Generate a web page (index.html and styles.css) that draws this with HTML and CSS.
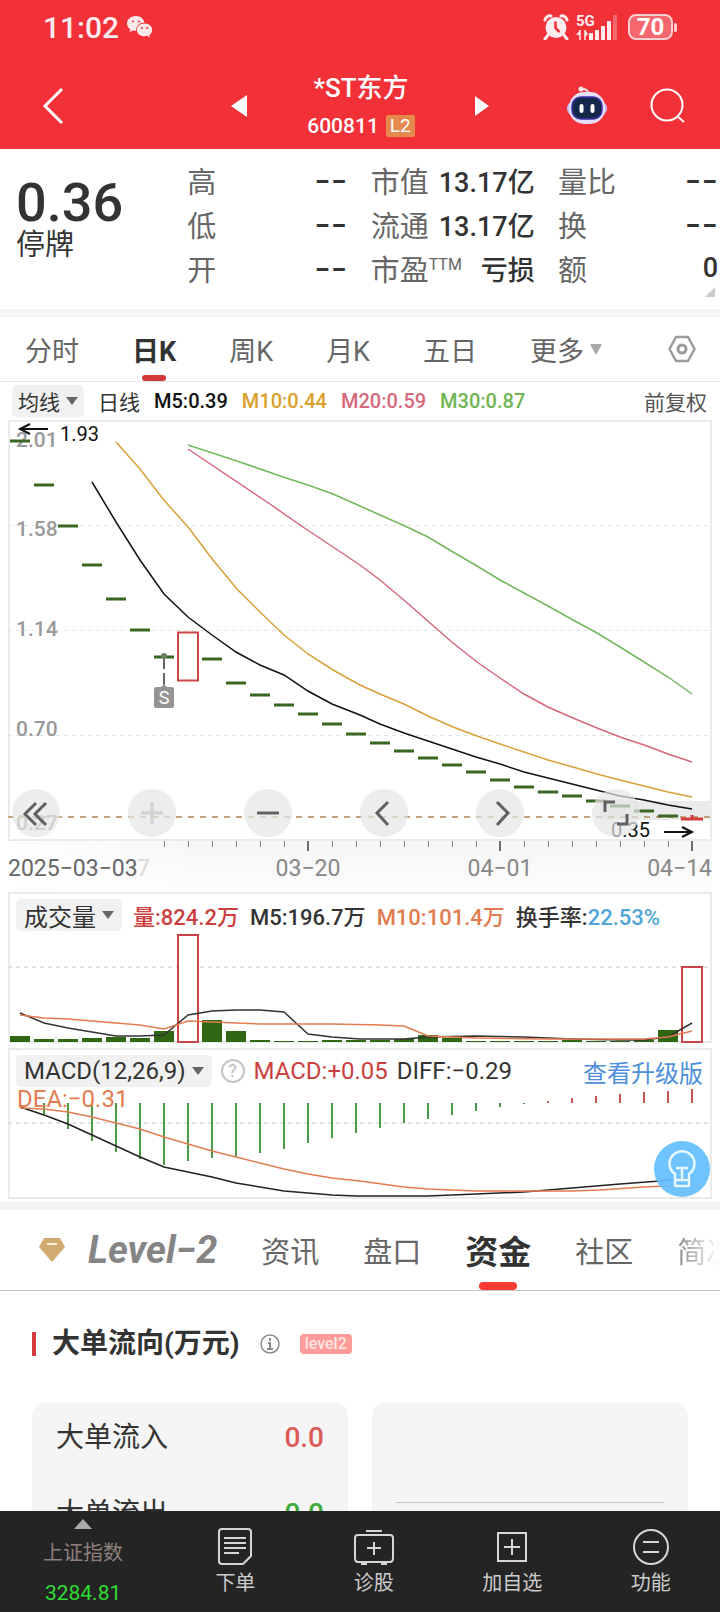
FILE: index.html
```html
<!DOCTYPE html>
<html lang="zh-CN">
<head>
    <meta charset="UTF-8">
    <meta name="viewport" content="width=device-width, initial-scale=1.0">
    <title>*ST东方 600811</title>
    <link rel="stylesheet" href="styles.css">
</head>
<body>
    <header class="top">
        <div class="status">
            <span class="time">11:02</span>
            <svg class="wechat" width="26" height="22" viewBox="0 0 26 22">
                <path fill="#fde9ea" d="M9 0C4 0 0 3.300 0 7.500c0 2.400 1.300 4.400 3.300 5.800L2.600 16l3.200-1.600c1 .3 2 .4 3.200.4C9 10 12.500 6.600 17.500 6.600 16.600 2.800 13.200 0 9 0z"/>
                <path fill="#fde9ea" d="M17.500 7.600c-4.300 0-7.700 2.800-7.700 6.300s3.400 6.300 7.700 6.300c.9 0 1.800-.1 2.600-.4l2.800 1.700-.6-2.600c1.800-1.200 2.900-3 2.900-5 0-3.500-3.400-6.300-7.700-6.300z"/>
                <g fill="#f13038"><circle cx="6" cy="5.500" r="1"/><circle cx="12" cy="5.500" r="1"/><circle cx="15" cy="12" r="1"/><circle cx="20" cy="12" r="1"/></g>
            </svg>
            <svg class="alarm" width="26" height="26" viewBox="0 0 26 26">
                <circle cx="13" cy="13.500" r="10.500" fill="#fdeced"/>
                <path d="M2 6a5 5 0 0 1 6-4M24 6a5 5 0 0 0-6-4M5 21l-3 4M21 21l3 4" fill="none" stroke="#fdeced" stroke-width="3" stroke-linecap="round"/>
                <path d="M12.500 7.500v6.500l4 4" fill="none" stroke="#f13038" stroke-width="2.500"/>
            </svg>
            <svg class="signal" width="42" height="26" viewBox="0 0 42 26">
                <text x="0" y="12" class="signal-text">5G</text>
                <path d="M4 16v10M9 16v10" stroke="#fdeced" stroke-width="1.500"/>
                <path d="M4 16l-4 5h4zM9 16l3 4-3 3z" fill="#fdeced"/>
                <path d="M15 26v-7M21 26V16M27 26V12M33 26V7" stroke="#fdeced" stroke-width="4"/>
                <path d="M39 26V1" stroke="#fdeced" stroke-opacity=".3" stroke-width="4"/>
            </svg>
            <span class="battery">70</span>
        </div>
        <div class="bar">
            <button class="icon-btn back" aria-label="返回">
                <svg width="24" height="38" viewBox="0 0 24 38"><path d="M21 2L4 19l17 17" fill="none" stroke="#fff" stroke-width="3"/></svg>
            </button>
            <div class="switch">
                <button class="icon-btn" aria-label="上一只"><svg width="16" height="22" viewBox="0 0 16 22"><path d="M16 0v22L0 11z" fill="#fff"/></svg></button>
                <div class="stock">
                    <h1>*ST东方</h1>
                    <p>600811 <span class="l2">L2</span></p>
                </div>
                <button class="icon-btn" aria-label="下一只"><svg width="14" height="20" viewBox="0 0 14 20"><path d="M0 0l14 10L0 20z" fill="#fff"/></svg></button>
            </div>
            <div class="tools">
                <button class="icon-btn" aria-label="智能助手">
                    <svg width="42" height="40" viewBox="0 0 42 40">
                        <path d="M22 7c0-3-2-4-6-4" fill="none" stroke="#f3dbe8" stroke-width="2"/>
                        <circle cx="15" cy="3" r="2.500" fill="#fbe9ee"/>
                        <rect x="1" y="16" width="40" height="13" rx="6" fill="#c9bdf0"/>
                        <rect x="3" y="6" width="36" height="32" rx="15" fill="#e6dff8"/>
                        <rect x="6" y="11" width="30" height="22" rx="9" fill="#14284c" stroke="#3c31a8" stroke-width="1.500"/>
                        <path d="M15.500 20v5M26.500 20v5" stroke="#fff" stroke-width="4" stroke-linecap="round"/>
                    </svg>
                </button>
                <button class="icon-btn" aria-label="搜索">
                    <svg width="35" height="36" viewBox="0 0 35 36"><circle cx="17" cy="17" r="15.500" fill="none" stroke="#fff" stroke-width="2"/><path d="M27 28l7 6" stroke="#fff" stroke-width="2"/></svg>
                </button>
            </div>
        </div>
    </header>

    <main>
        <section class="quote">
            <div class="price"><strong>0.36</strong><span>停牌</span></div>
            <dl class="stats">
                <div><dt>高</dt><dd class="none">--</dd></div>
                <div><dt>低</dt><dd class="none">--</dd></div>
                <div><dt>开</dt><dd class="none">--</dd></div>
            </dl>
            <dl class="stats">
                <div><dt>市值</dt><dd>13.17亿</dd></div>
                <div><dt>流通</dt><dd>13.17亿</dd></div>
                <div><dt>市盈<sup>TTM</sup></dt><dd>亏损</dd></div>
            </dl>
            <dl class="stats">
                <div><dt>量比</dt><dd class="none">--</dd></div>
                <div><dt>换</dt><dd class="none">--</dd></div>
                <div><dt>额</dt><dd>0</dd></div>
            </dl>
            <i class="expand"></i>
        </section>

        <nav class="periods">
            <button>分时</button>
            <button class="active">日K</button>
            <button>周K</button>
            <button>月K</button>
            <button>五日</button>
            <button>更多<i class="caret"></i></button>
            <button class="setting" aria-label="设置">
                <svg width="28" height="28" viewBox="0 0 28 28" fill="none" stroke="#9b9b9b"><path d="M8 2h12l6.500 12L20 26H8L1.500 14z" stroke-width="2.500" stroke-linejoin="round"/><circle cx="14" cy="14" r="4" stroke-width="3"/></svg>
            </button>
        </nav>

        <div class="legend">
            <button class="pill">均线<i class="caret"></i></button>
            <span>日线</span>
            <span class="black">M5:0.39</span>
            <span class="yellow">M10:0.44</span>
            <span class="pink">M20:0.59</span>
            <span class="green">M30:0.87</span>
            <span class="adjust">前复权</span>
        </div>

        <div class="panel kline">
            <svg class="chart" viewBox="10 422 700 417">
                <path class="grid" d="M8 525.500H708M8 630.500H708M8 735.500H708"/>
                <g class="scale">
                    <text x="16" y="447">2.01</text>
                    <text x="16" y="536">1.58</text>
                    <text x="16" y="636">1.14</text>
                    <text x="16" y="736">0.70</text>
                    <text x="16" y="830">0.27</text>
                </g>
                <rect x="600" y="801" width="110" height="19" fill="#ebebeb"/>
                <path d="M8 817H710" stroke="#bfa27a" stroke-width="2" stroke-dasharray="6 6"/>
                <!-- daily candles, 24 apart -->
                <path stroke="#3a6722" stroke-width="3" d="M10 441h20M34 485h20M58 526h20M82 565h20M106 599h20M130 630h20M154 657h20M202 659h20M226 683h20M250 695h20M274 705h20M298 714h20M322 724h20M346 734h20M370 743h20M394 751h20M418 758h20M442 765h20M466 772h20M490 780h20M514 787h20M538 792h20M562 796h20M586 801h20M610 806h20M634 811h20M658 816h20"/>
                <rect x="178" y="632.500" width="20" height="48" fill="#fff" stroke="#cc4645" stroke-width="2"/>
                <path d="M681 819h22M692 815v4" stroke="#d63c3a" stroke-width="3"/>
                <g fill="none" stroke-width="1.500">
                    <polyline stroke="#111" points="92,482 116,522 140,560 164,594 188,617 212,635 236,652 260,665 284,675 308,691 332,704 360,715 380,724 404,733 428,741 452,749 476,757 500,764 524,772 548,778 572,784 596,790 620,796 644,800 668,805 692,809"/>
                    <polyline stroke="#d9a03a" points="116,442 140,469 163,499 188,527 213,560 237,589 261,613 284,635 308,654 333,670 360,685 380,694 404,704 428,716 453,727 477,736 500,744 524,752 548,760 573,767 597,774 620,780 644,786 668,792 692,797"/>
                    <polyline stroke="#d5687c" points="188,449 267,502 300,525 333,547 360,565 380,580 405,601 438,630 453,643 477,662 500,678 524,694 548,707 573,718 597,728 620,737 647,746 668,754 692,762"/>
                    <polyline stroke="#72b85c" points="188,445 237,461 283,477 308,485 333,494 360,506 380,515 405,526 428,537 453,552 477,566 500,580 524,593 548,606 573,620 597,633 620,647 644,662 668,677 692,694"/>
                </g>
                <!-- sell mark -->
                <path d="M164 658v11M164 673v12" stroke="#666" stroke-width="2"/>
                <circle cx="164" cy="656" r="3" fill="#6b8060"/>
                <path d="M156 687h5l3-3 3 3h5q2 0 2 2v17q0 2-2 2h-16q-2 0-2-2v-17q0-2 2-2z" fill="#949494"/>
                <text x="164" y="704" class="mark">S</text>
                <g class="peak">
                    <path d="M48 429H20M30 424l-10 5 10 5M664 832h27M682 827l10 5-10 5"/>
                    <text x="60" y="441">1.93</text>
                    <text x="611" y="837">0.35</text>
                </g>
            </svg>
            <div class="controls">
                <button aria-label="最左"><svg viewBox="0 0 48 48"><path d="M24 14L13 25l11 11M34 14L23 25l11 11"/></svg></button>
                <button aria-label="放大" disabled><svg viewBox="0 0 48 48"><path d="M13 24h22M24 13v22"/></svg></button>
                <button aria-label="缩小"><svg viewBox="0 0 48 48"><path d="M13 24h22"/></svg></button>
                <button aria-label="左移"><svg viewBox="0 0 48 48"><path d="M28 13L17 24l11 12"/></svg></button>
                <button aria-label="右移"><svg viewBox="0 0 48 48"><path d="M21 13l11 11-11 12"/></svg></button>
                <button aria-label="全屏"><svg viewBox="0 0 48 48"><path d="M13 23V13h10M35 25v10H25"/></svg></button>
            </div>
        </div>

        <svg class="axis" viewBox="8 841 704 51">
            <path stroke="#8a8a8a" d="M164.500 841v6M188.500 841v6M212.500 841v6M236.500 841v6M260.500 841v6M284.500 841v6M332.500 841v6M356.500 841v6M380.500 841v6M404.500 841v6M428.500 841v6M452.500 841v6M476.500 841v6M524.500 841v6M548.500 841v6M572.500 841v6M596.500 841v6M620.500 841v6M644.500 841v6M668.500 841v6"/>
            <path stroke="#6f6f6f" stroke-width="2" d="M308 841v10M500 841v10M692 841v10"/>
            <text x="8" y="876" class="first">2025−03−03</text>
            <text x="137" y="876" class="faded">7</text>
            <text x="308" y="876" text-anchor="middle">03−20</text>
            <text x="500" y="876" text-anchor="middle">04−01</text>
            <text x="712" y="876" text-anchor="end">04−14</text>
        </svg>

        <div class="panel volume">
            <div class="panel-head">
                <button class="pill">成交量<i class="caret"></i></button>
                <span class="red">量:824.2万</span>
                <span>M5:196.7万</span>
                <span class="orange">M10:101.4万</span>
                <span>换手率:<b class="blue">22.53%</b></span>
            </div>
            <svg class="chart" viewBox="10 932 700 109">
                <path class="grid" stroke-width="2" d="M8 967H708"/>
                <path fill="#2f6614" d="M10 1036h20v6h-20zM34 1039h20v3h-20zM58 1039h20v3h-20zM82 1038h20v4h-20zM106 1037h20v5h-20zM130 1038h20v4h-20zM154 1031h20v11h-20zM202 1020h20v22h-20zM226 1031h20v11h-20zM250 1040h20v2h-20zM274 1041h20v1h-20zM298 1041h20v1h-20zM322 1040h20v2h-20zM346 1040h20v2h-20zM370 1040h20v2h-20zM394 1039h20v3h-20zM418 1035h20v7h-20zM442 1038h20v4h-20zM466 1041h20v1h-20zM490 1041h20v1h-20zM514 1041h20v1h-20zM538 1041h20v1h-20zM562 1040h20v2h-20zM586 1041h20v1h-20zM610 1041h20v1h-20zM634 1040h20v2h-20zM658 1030h20v12h-20z"/>
                <path fill="#fff" stroke="#cc4645" stroke-width="2" d="M178 935h20v107h-20zM682 967h20v75h-20z"/>
                <g fill="none" stroke-width="1.500">
                    <polyline stroke="#333" points="20,1013 44,1023 68,1028 92,1032 116,1036 140,1036 164,1035 188,1015 212,1011 236,1010 260,1010 284,1012 308,1034 332,1037 360,1039 404,1039 428,1037 476,1036 524,1037 572,1039 620,1040 644,1040 668,1037 692,1023"/>
                    <polyline stroke="#e37c4f" points="20,1015 44,1018 68,1019 92,1021 140,1025 164,1029 188,1021 212,1022 260,1024 332,1024 380,1025 404,1026 428,1036 476,1038 548,1039 620,1039 644,1039 668,1037 692,1031"/>
                </g>
            </svg>
        </div>

        <div class="panel macd">
            <div class="panel-head">
                <button class="pill">MACD(12,26,9)<i class="caret"></i></button>
                <button class="help" aria-label="说明">?</button>
                <span class="red">MACD:+0.05</span>
                <span>DIFF:−0.29</span>
                <a href="#" class="upgrade">查看升级版</a>
            </div>
            <span class="dea">DEA:−0.31</span>
            <svg class="chart" viewBox="10 1088 700 109">
                <path class="grid" stroke-width="2" d="M8 1123H708"/>
                <path stroke="#4b9a45" stroke-width="2" d="M44 1103v11M68 1103v26M92 1103v38M116 1103v49M140 1103v56M164 1103v62M188 1103v58M212 1103v55M236 1103v54M260 1103v50M284 1103v46M308 1103v40M332 1103v35M356 1103v30M380 1103v25M404 1103v20M428 1103v16M452 1103v12M476 1103v8M500 1103v4M524 1103v1"/>
                <path stroke="#cc5553" stroke-width="2" d="M548 1103v-2M572 1103v-5M596 1103v-7M620 1103v-9M644 1103v-11M668 1103v-12M692 1103v-14"/>
                <g fill="none" stroke-width="1.500">
                    <polyline stroke="#222" points="20,1107 44,1115 68,1124 92,1135 116,1146 140,1157 164,1167 188,1172 212,1177 236,1183 260,1187 284,1191 308,1193 332,1195 356,1196 428,1196 476,1194 524,1192 572,1188 620,1184 660,1181 692,1178"/>
                    <polyline stroke="#e37c4f" points="20,1108 44,1109 68,1112 92,1117 116,1123 140,1129 164,1137 188,1144 212,1151 236,1157 260,1163 284,1169 308,1174 332,1178 360,1181 404,1187 428,1189 476,1191 524,1191 572,1191 600,1190 644,1187 692,1185"/>
                </g>
            </svg>
            <button class="bulb" aria-label="提示">
                <svg width="32" height="40" viewBox="0 0 32 40" fill="none" stroke="#e6f8ff" stroke-width="2.500"><path d="M9 25a12.500 12.500 0 1 1 14 0v11q0 1-1 1H10q-1 0-1-1zM9 31h14M10 19h12M16 19v12"/></svg>
            </button>
        </div>

        <nav class="sections">
            <svg width="28" height="26" viewBox="0 0 28 26"><path d="M6 1h16l5 9-13 15L1 10z" fill="#cfaa71"/><path d="M9 7h10" stroke="#fbefd9" stroke-width="2"/></svg>
            <button class="level">Level−2</button>
            <button>资讯</button>
            <button>盘口</button>
            <button class="active">资金</button>
            <button>社区</button>
            <button class="last">简况</button>
        </nav>

        <section class="flow">
            <h2>大单流向(万元)
                <svg width="20" height="20" viewBox="0 0 20 20" fill="none" stroke="#8c8c8c"><circle cx="10" cy="10" r="9" stroke-width="1.500"/><path d="M10 4v3M8 9h2v6M7 15h6" stroke-width="2"/></svg>
                <span class="tag">level2</span>
            </h2>
            <div class="cards">
                <dl class="card">
                    <div><dt>大单流入</dt><dd class="in">0.0</dd></div>
                    <div><dt>大单流出</dt><dd class="out">0.0</dd></div>
                </dl>
                <div class="card"><hr></div>
            </div>
        </section>
    </main>

    <footer class="dock">
        <button class="index">
            <i class="up"></i>
            <span>上证指数</span>
            <b>3284.81</b>
        </button>
        <button>
            <svg width="38" height="40" viewBox="0 0 38 40"><path d="M6 2h26q3 0 3 3v24l-8 8H6q-3 0-3-3V5q0-3 3-3zM8 11h22M8 16h22M8 21h22M8 26h15"/></svg>
            <span>下单</span>
        </button>
        <button>
            <svg width="42" height="40" viewBox="0 0 42 40"><path d="M13 4h16M5 8h32q3 0 3 3v20q0 4-3 4H5q-3 0-3-4V11q0-3 3-3zM21 15v13M14 21h14M8 37h6M28 37h6"/></svg>
            <span>诊股</span>
        </button>
        <button>
            <svg width="38" height="40" viewBox="0 0 38 40"><path d="M5 6h28v28H5zM19 12v16M11 20h16"/></svg>
            <span>加自选</span>
        </button>
        <button>
            <svg width="38" height="40" viewBox="0 0 38 40"><circle cx="19" cy="20" r="17"/><path d="M11 15h16M11 25h16"/></svg>
            <span>功能</span>
        </button>
    </footer>
</body>
</html>
```

FILE: styles.css
```css
* {
    box-sizing: border-box;
    margin: 0;
    padding: 0;
}
body {
    display: flex;
    flex-direction: column;
    height: 100vh;
    font-family: Roboto, "Noto Sans CJK SC", sans-serif;
    color: #333;
    background: #fff;
    overflow: hidden;
}
button {
    border: 0;
    background: none;
    font: inherit;
    color: inherit;
    white-space: nowrap;
}
svg {
    display: block;
    flex: none;
}
i {
    display: inline-block;
}

/* header */
.top {
    background: #f13038;
    color: #fff;
    flex: none;
}
.status {
    display: flex;
    align-items: center;
    height: 54px;
    padding: 0 47px 0 43px;
}
.time {
    font-size: 30px;
    font-weight: 500;
    color: #fdeced;
}
.wechat {
    margin-left: 8px;
}
.alarm {
    margin-left: auto;
}
.signal {
    margin: 0 10px 0 7px;
    overflow: visible;
}
.signal-text {
    font-size: 15px;
    font-weight: 700;
    fill: #fdeced;
}
.battery {
    position: relative;
    width: 45px;
    height: 26px;
    border: 2px solid #fbd0d2;
    border-radius: 8px;
    background: #f4686d;
    font-size: 24px;
    font-weight: 700;
    line-height: 23px;
    text-align: center;
}
.battery::after {
    content: "";
    position: absolute;
    right: -6px;
    top: 7px;
    width: 3px;
    height: 9px;
    border-radius: 2px;
    background: #fbd0d2;
}
.bar {
    display: grid;
    grid-template-columns: 1fr auto 1fr;
    align-items: center;
    height: 95px;
    padding: 8px 35px 0;
}
.icon-btn {
    display: flex;
}
.back {
    padding-left: 6px;
}
.switch {
    display: flex;
    align-items: center;
    gap: 60px;
}
.stock {
    text-align: center;
}
.stock h1 {
    font-size: 26px;
    font-weight: 500;
    line-height: 40px;
}
.stock p {
    display: flex;
    align-items: center;
    gap: 7px;
    font-size: 21px;
    font-weight: 500;
    line-height: 36px;
}
.l2 {
    padding: 0 4px;
    border-radius: 2px;
    background: #e58a4c;
    font-size: 19px;
    font-weight: 400;
    line-height: 22px;
}
.tools {
    display: flex;
    align-items: center;
    justify-content: flex-end;
    gap: 42px;
}

main {
    flex: 1;
    min-height: 0;
    overflow: hidden;
}

/* quote */
.quote {
    position: relative;
    display: grid;
    grid-template-columns: 148px 160px 164px 160px;
    justify-content: space-between;
    padding: 9px 2px 19px 16px;
    border-bottom: 8px solid #f4f4f4;
}
.price {
    padding-top: 18px;
}
.price strong,
.price span {
    display: block;
}
.price strong {
    font-size: 54px;
    font-weight: 500;
    line-height: 54px;
}
.price span {
    font-size: 29px;
    line-height: 30px;
}
.stats div {
    display: flex;
    justify-content: space-between;
    align-items: center;
    height: 44px;
    font-size: 29px;
    white-space: nowrap;
}
.stats dt {
    color: #666;
}
.stats dd {
    font-size: 27px;
    font-weight: 500;
}
.stats .none {
    font-family: Inter, sans-serif;
    font-size: 36px;
    font-weight: 400;
}
.stats sup {
    font-size: 16px;
    line-height: 16px;
}
.expand {
    position: absolute;
    right: 5px;
    bottom: 12px;
    border: 5px solid #ccc;
    border-top-color: transparent;
    border-left-color: transparent;
}

/* period tabs */
.periods {
    display: flex;
    align-items: center;
    gap: 53px;
    height: 65px;
    padding: 0 24px 0 25px;
    border-bottom: 1px solid #e3e3e3;
    font-size: 27px;
    color: #666;
}
.periods button {
    position: relative;
    display: flex;
    align-items: center;
    height: 64px;
}
.periods .active {
    font-weight: 700;
    color: #333;
}
.periods .active::after,
.sections .active::after {
    content: "";
    position: absolute;
    left: 50%;
    bottom: 0;
    transform: translateX(-50%);
    width: 24px;
    height: 6px;
    border-radius: 3px;
    background: #d23a39;
}
.periods .setting {
    margin-left: auto;
}
.caret {
    margin-left: 6px;
    border: 6px solid transparent;
    border-top: 8px solid #666;
    border-bottom: 0;
}
.periods .caret {
    border-top: 11px solid #aaa;
}

/* legend */
.legend {
    display: flex;
    align-items: center;
    gap: 14px;
    height: 38px;
    padding: 0 13px 0 12px;
    font-size: 21px;
    white-space: nowrap;
}
.pill {
    display: flex;
    align-items: center;
    height: 32px;
    padding: 0 8px;
    border-radius: 5px;
    background: #f1f1f1;
}
.legend .pill {
    padding: 0 6px;
}
.adjust {
    margin-left: auto;
    color: #555;
}
.legend .black,
.legend .yellow,
.legend .pink,
.legend .green {
    font-size: 20px;
    font-weight: 500;
}
.black { color: #111; }
.yellow { color: #daa02c; }
.pink { color: #d5687c; }
.green { color: #6fb551; }
.red { color: #cb3f3e; }
.orange { color: #e37c4f; }
.blue { color: #4fa5d8; font-weight: 500; }

/* charts */
.panel {
    position: relative;
    margin: 0 8px;
    border: 2px solid #ebebeb;
}
.chart {
    width: 100%;
    height: auto;
    overflow: visible;
}
.grid {
    stroke: #e2e2e2;
    stroke-dasharray: 4 4;
}
.scale text {
    font-size: 21px;
    font-weight: 500;
    fill: #999;
}
.mark {
    font-size: 18px;
    fill: #fff;
    text-anchor: middle;
}
.peak {
    font-size: 20px;
    fill: #111;
}
.peak path {
    fill: none;
    stroke: #111;
    stroke-width: 2;
}
.controls {
    position: absolute;
    left: 2px;
    right: 70px;
    bottom: 2px;
    display: flex;
    justify-content: space-between;
}
.controls button {
    width: 48px;
    height: 48px;
    border-radius: 50%;
    background: rgba(229, 229, 229, 0.7);
}
.controls path {
    fill: none;
    stroke: #606060;
    stroke-width: 3;
}
.controls :disabled path {
    stroke: #d2d2d2;
}
.axis {
    width: calc(100% - 16px);
    height: auto;
    margin: 0 8px;
    background: linear-gradient(to right, #fff, rgba(255, 255, 255, 0) 200px), linear-gradient(#f5f5f5, #fdfdfd);
    font-size: 23px;
    fill: #888;
}
.axis .first {
    fill: #666;
}
.axis .faded {
    fill: #d8d8d8;
}
.panel-head {
    display: flex;
    align-items: center;
    gap: 11px;
    height: 38px;
    padding: 4px 7px 0 6px;
    font-size: 22px;
    font-weight: 500;
    white-space: nowrap;
}
.panel-head .pill {
    font-size: 24px;
    font-weight: 400;
}
.macd {
    margin-top: 5px;
    margin-bottom: 3px;
}
.macd .panel-head {
    gap: 9px;
    font-size: 24px;
    font-weight: 400;
}
.help {
    width: 24px;
    height: 24px;
    border: 2px solid #c4c4c4;
    border-radius: 50%;
    color: #bbb;
    font-size: 18px;
    line-height: 20px;
}
.upgrade {
    margin-left: auto;
    color: #4e8fdb;
    text-decoration: none;
}
.dea {
    position: absolute;
    left: 7px;
    top: 35px;
    font-size: 24px;
    color: #e37c4f;
}
.bulb {
    position: absolute;
    right: 0;
    bottom: 0;
    display: flex;
    align-items: center;
    justify-content: center;
    width: 56px;
    height: 56px;
    border-radius: 50%;
    background: rgba(99, 190, 255, 0.92);
}

/* section tabs */
.sections {
    display: flex;
    align-items: center;
    gap: 44px;
    height: 89px;
    padding-left: 38px;
    border-top: 8px solid #f4f4f4;
    border-bottom: 1px solid #c4c4c4;
    font-size: 29px;
    color: #666;
    overflow: hidden;
}
.sections button {
    position: relative;
    flex: none;
    height: 80px;
}
.sections .level {
    margin-left: -22px;
    font-size: 38px;
    font-style: italic;
    font-weight: 700;
    color: #858585;
}
.sections .active {
    font-size: 33px;
    font-weight: 700;
    color: #333;
}
.sections .active::after {
    width: 38px;
    height: 8px;
    border-radius: 4px;
    background: #f93b32;
}
.sections .last {
    background: linear-gradient(90deg, #888, #fff 42px);
    background-clip: text;
    color: transparent;
}

/* money flow */
.flow {
    padding: 33px 32px 0;
}
.flow h2 {
    display: flex;
    align-items: center;
    gap: 20px;
    height: 40px;
    font-size: 28px;
    line-height: 40px;
}
.flow h2::before {
    content: "";
    width: 4px;
    height: 24px;
    margin-right: -4px;
    background: #d23a39;
}
.tag {
    padding: 0 5px;
    border-radius: 4px;
    background: #ff9c9a;
    color: #ffe5e4;
    font-size: 16px;
    font-weight: 500;
    line-height: 20px;
}
.cards {
    display: grid;
    grid-template-columns: 1fr 1fr;
    gap: 24px;
    margin-top: 39px;
}
.card {
    height: 200px;
    padding: 0 24px;
    border-radius: 12px;
    background: #f5f5f5;
}
.card div {
    display: flex;
    justify-content: space-between;
    height: 76px;
    font-size: 28px;
    line-height: 70px;
}
.card dd {
    font-weight: 500;
}
.card hr {
    margin-top: 99px;
    border: 0;
    border-top: 1px solid #c4c4c4;
}
.in { color: #dc5a58; }
.out { color: #3fa83d; }

/* bottom dock */
.dock {
    display: grid;
    grid-template-columns: 6fr 5fr 5fr 5fr 5fr;
    height: 101px;
    flex: none;
    background: #242424;
    color: #ccc;
    font-size: 20px;
}
.dock button {
    display: flex;
    flex-direction: column;
    align-items: center;
    padding-top: 16px;
    line-height: 32px;
}
.dock path,
.dock circle {
    fill: none;
    stroke: #d6d6d6;
    stroke-width: 2;
}
.dock .index {
    padding-top: 8px;
    color: #8f807e;
}
.dock .index b {
    margin-top: 8px;
    font-size: 21px;
    font-weight: 400;
    color: #2fdc33;
}
.up {
    margin-bottom: 8px;
    border: 9px solid transparent;
    border-bottom: 10px solid #aaa;
    border-top: 0;
}
```
